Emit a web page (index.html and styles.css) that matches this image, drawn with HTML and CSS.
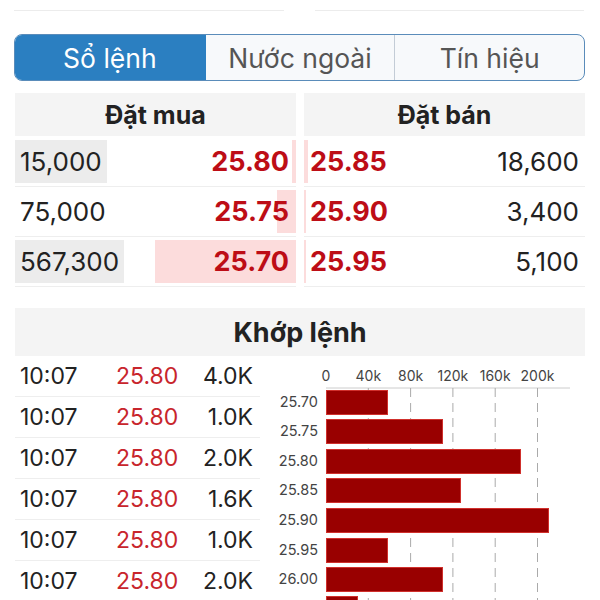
FILE: index.html
```html
<!DOCTYPE html>
<html lang="vi">
<head>
  <meta charset="UTF-8">
  <meta name="viewport" content="width=device-width, initial-scale=1.0">
  <title>Sổ lệnh</title>
  <link rel="stylesheet" href="styles.css">
</head>
<body>

<!-- Summary row (scrolled mostly out of view) -->
<div class="summary">
  <div class="summary-cell"><span>Vị thế</span></div>
  <div class="summary-cell right"><span>Lịch sử</span></div>
</div>

<!-- Tabs -->
<div class="tabs">
  <div class="tab active">Sổ lệnh</div>
  <div class="tab">Nước ngoài</div>
  <div class="tab">Tín hiệu</div>
</div>

<!-- Order book -->
<div class="book">
  <div class="book-side buy">
    <div class="book-head">Đặt mua</div>
    <div class="book-row" style="--depth: 4px"><span class="qty changed">15,000</span><span class="price">25.80</span></div>
    <div class="book-row" style="--depth: 19px"><span class="qty">75,000</span><span class="price">25.75</span></div>
    <div class="book-row" style="--depth: 141px"><span class="qty changed">567,300</span><span class="price">25.70</span></div>
  </div>
  <div class="book-side sell">
    <div class="book-head">Đặt bán</div>
    <div class="book-row" style="--depth: 4px"><span class="price">25.85</span><span class="qty">18,600</span></div>
    <div class="book-row" style="--depth: 2px"><span class="price">25.90</span><span class="qty">3,400</span></div>
    <div class="book-row" style="--depth: 2px"><span class="price">25.95</span><span class="qty">5,100</span></div>
  </div>
</div>

<!-- Matched orders -->
<div class="match">
  <div class="match-head">Khớp lệnh</div>
  <div class="match-body">
    <div class="trades">
      <div class="trade"><span>10:07</span><span class="trade-price">25.80</span><span>4.0K</span></div>
      <div class="trade"><span>10:07</span><span class="trade-price">25.80</span><span>1.0K</span></div>
      <div class="trade"><span>10:07</span><span class="trade-price">25.80</span><span>2.0K</span></div>
      <div class="trade"><span>10:07</span><span class="trade-price">25.80</span><span>1.6K</span></div>
      <div class="trade"><span>10:07</span><span class="trade-price">25.80</span><span>1.0K</span></div>
      <div class="trade"><span>10:07</span><span class="trade-price">25.80</span><span>2.0K</span></div>
    </div>

    <!-- Volume by price -->
    <svg class="chart" width="325" height="245" viewBox="0 0 325 245">
      <g class="axis-labels">
        <text x="66" y="25">0</text>
        <text x="108.3" y="25">40k</text>
        <text x="150.6" y="25">80k</text>
        <text x="192.9" y="25">120k</text>
        <text x="235.2" y="25">160k</text>
        <text x="277.5" y="25">200k</text>
      </g>
      <line class="axis" x1="66" y1="32" x2="310" y2="32"/>
      <g class="grid">
        <line x1="108.3" y1="32" x2="108.3" y2="245"/>
        <line x1="150.6" y1="32" x2="150.6" y2="245"/>
        <line x1="192.9" y1="32" x2="192.9" y2="245"/>
        <line x1="235.2" y1="32" x2="235.2" y2="245"/>
        <line x1="277.5" y1="32" x2="277.5" y2="245"/>
      </g>
      <g class="bars">
        <rect x="66.5" y="34.5" width="61" height="24"/>
        <rect x="66.5" y="63.5" width="116" height="24"/>
        <rect x="66.5" y="93.5" width="194" height="24"/>
        <rect x="66.5" y="122.5" width="134" height="24"/>
        <rect x="66.5" y="152.5" width="222" height="24"/>
        <rect x="66.5" y="182.5" width="61" height="24"/>
        <rect x="66.5" y="211.5" width="116" height="24"/>
        <rect x="66.5" y="240.5" width="31" height="24"/>
      </g>
      <g class="price-labels">
        <text x="58" y="51">25.70</text>
        <text x="58" y="80">25.75</text>
        <text x="58" y="110">25.80</text>
        <text x="58" y="139">25.85</text>
        <text x="58" y="169">25.90</text>
        <text x="58" y="199">25.95</text>
        <text x="58" y="228">26.00</text>
        <text x="58" y="257">26.05</text>
      </g>
    </svg>
  </div>
</div>

</body>
</html>
```

FILE: styles.css
```css
body {
  margin: 0;
  font-family: Inter, "Liberation Sans", sans-serif;
  color: #222;
  background-color: #fff;
}
/* Summary row */
.summary {
  display: flex;
  gap: 31px;
  padding: 0 16px 0 14px;
}
.summary-cell {
  flex: 1;
  height: 10px;
  overflow: hidden;
  border-bottom: 1px solid #ececec;
  font-size: 18px;
  line-height: 20px;
}
.summary-cell span {
  display: block;
  margin-top: -20px;
}
.summary-cell.right span {
  text-align: right;
  padding-right: 30px;
}
/* Tabs */
.tabs {
  display: grid;
  grid-template-columns: repeat(3, 1fr);
  box-sizing: border-box;
  height: 47px;
  margin: 23px 15px 0 14px;
  border: 1.5px solid #5a8cba;
  border-radius: 8px;
  overflow: hidden;
  background-color: #f7f9fb;
}
.tab {
  display: flex;
  align-items: center;
  justify-content: center;
  font-size: 26.5px;
  color: #555;
  border-left: 1px solid #c3ccd6;
}
.tab:first-child {
  border-left: none;
}
.tab.active {
  background-color: #2b7fc1;
  color: #fff;
}
.tab.active + .tab {
  border-left-color: #2b7fc1;
}
/* Order book */
.book {
  display: grid;
  grid-template-columns: 1fr 1fr;
  gap: 8px;
  margin: 12px 15px 0;
}
.book-head {
  height: 43px;
  margin-bottom: 1px;
  display: flex;
  align-items: center;
  justify-content: center;
  background-color: #f4f4f4;
  font-size: 25px;
  font-weight: 700;
}
.book-row {
  height: 49px;
  display: flex;
  align-items: center;
  justify-content: space-between;
  border-bottom: 1px solid #eee;
  font-size: 26px;
  background-image: linear-gradient(#fcdcdc, #fcdcdc);
  background-repeat: no-repeat;
  background-size: var(--depth) 43px;
}
.buy .book-row {
  background-position: right center;
  padding-right: 7px;
}
.sell .book-row {
  background-position: left center;
  padding: 0 6px 0 6px;
}
.qty {
  padding: 0 5px;
  line-height: 43px;
}
.qty.changed {
  background-color: #ececec;
}
.sell .qty {
  padding: 0;
}
.price {
  font-size: 27px;
  font-weight: 700;
  color: #bd0d16;
}
/* Matched orders */
.match {
  margin: 21px 15px 0;
}
.match-head {
  height: 48px;
  display: flex;
  align-items: center;
  justify-content: center;
  background-color: #f4f4f4;
  font-size: 27px;
  font-weight: 700;
}
.match-body {
  display: flex;
}
.trades {
  width: 245px;
  flex: none;
}
.trade {
  display: grid;
  grid-template-columns: 96px 1fr auto;
  align-items: center;
  height: 40px;
  padding: 0 7px 0 5px;
  border-bottom: 1px solid #eee;
  font-size: 23px;
}
.trade-price {
  color: #c8252c;
}
/* Chart */
.chart {
  display: block;
  flex: none;
  overflow: visible;
  font-family: Inter, "Liberation Sans", sans-serif;
}
.chart text {
  fill: #444;
  font-size: 14.5px;
}
.axis-labels text {
  text-anchor: middle;
  font-size: 14px;
}
.price-labels text {
  text-anchor: end;
}
.axis {
  stroke: #ccc;
  stroke-width: 1;
}
.grid line {
  stroke: #aaa;
  stroke-width: 1;
  stroke-dasharray: 9 6;
}
.bars rect {
  fill: #990000;
  stroke: #d0302c;
  stroke-width: 1;
}
```
